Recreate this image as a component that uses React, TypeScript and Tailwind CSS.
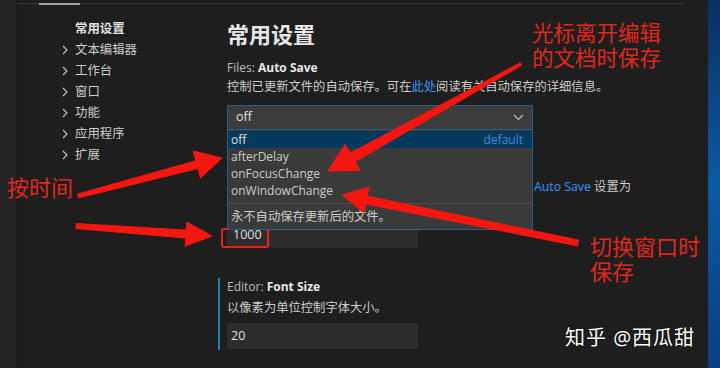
import React from "react";

type Pt = [number, number];

// tapered hand-drawn style arrow, returned as a polygon point list
const arrowPoints = (tail: Pt, tip: Pt, tailW: number, shaftW: number, headLen: number, headW: number) => {
  const dx = tip[0] - tail[0];
  const dy = tip[1] - tail[1];
  const len = Math.hypot(dx, dy);
  const d: Pt = [dx / len, dy / len];
  const p: Pt = [-d[1], d[0]];
  const b: Pt = [tip[0] - d[0] * headLen, tip[1] - d[1] * headLen];
  const at = (o: Pt, k: number): string => `${(o[0] + p[0] * k).toFixed(1)},${(o[1] + p[1] * k).toFixed(1)}`;
  return [
    at(tail, tailW / 2),
    at(b, shaftW / 2),
    at(b, headW / 2),
    `${tip[0]},${tip[1]}`,
    at(b, -headW / 2),
    at(b, -shaftW / 2),
    at(tail, -tailW / 2),
  ].join(" ");
};

const arrows = [
  arrowPoints([521, 64], [328, 171], 3, 10, 28, 30),
  arrowPoints([78, 196], [222, 158], 4, 8, 26, 28),
  arrowPoints([76, 226], [212, 236], 5, 8, 26, 24),
  arrowPoints([578, 243], [342, 195], 6, 8, 25, 26),
];

const tocItems = ["文本编辑器", "工作台", "窗口", "功能", "应用程序", "扩展"];

const Chevron = () => (
  <svg width="6" height="10" viewBox="0 0 6 10" className="mr-[7px] shrink-0">
    <path d="M1 1 L5 5 L1 9" fill="none" stroke="#c5c5c5" strokeWidth="1.1" />
  </svg>
);

const App: React.FC = () => {
  return (
    <div className="relative flex w-[720px] h-[368px] overflow-hidden bg-[#1e1e1e] font-['Open_Sans','Noto_Sans_CJK_SC',sans-serif] text-[#cccccc]">
      {/* left strip */}
      <div className="w-[17px] shrink-0 bg-[#242424] border-r border-[#1a1a1a]" />

      {/* settings editor */}
      <div className="flex-1 flex flex-col pt-[3px]">
        <div className="flex items-start w-[667px]">
          <div className="w-[22px] h-px bg-[#3a3a3a]" />
          <div className="w-[41px] h-[2px] bg-[#a0a0a0]" />
          <div className="flex-1 h-px bg-[#3a3a3a]" />
        </div>

        <div className="flex">
          {/* table of contents */}
          <div className="w-[210px] shrink-0 pl-[45px] pt-[13px] text-[12.4px]">
            <div className="pl-[13px] leading-[21px] font-bold text-[#e0e0e0]">常用设置</div>
            {tocItems.map((t) => (
              <div key={t} className="flex items-center leading-[21px]">
                <Chevron />
                <span>{t}</span>
              </div>
            ))}
          </div>

          {/* settings list */}
          <div className="flex flex-col w-[460px]">
            <h1 className="mt-[15px] text-[22px] leading-[28px] font-bold text-[#e7e7e7]">常用设置</h1>

            <div className="mt-[11px] text-[12px] leading-[18px] text-[#bdbdbd]">
              Files: <span className="font-bold text-[#e7e7e7]">Auto Save</span>
            </div>
            <div className="mt-px text-[12.3px] leading-[18px] whitespace-nowrap">
              控制已更新文件的自动保存。可在<span className="text-[#3794ff]">此处</span>阅读有关自动保存的详细信息。
            </div>

            {/* select + open dropdown */}
            <div className="relative mt-[9px] w-[306px] h-[25px]">
              <div className="flex items-center justify-between h-full px-[8px] bg-[#3c3c3c] border border-[#2b5d85] text-[12.5px] text-[#e0e0e0]">
                <span>off</span>
                <svg width="11" height="7" viewBox="0 0 11 7">
                  <path d="M1 1 L5.5 5.5 L10 1" fill="none" stroke="#c5c5c5" strokeWidth="1.1" />
                </svg>
              </div>
              <div className="absolute top-full left-0 z-10 w-full h-[100px] flex flex-col bg-[#3a3a3a] border-x border-b border-[#2b5d85] text-[12px] leading-[17px]">
                <div className="flex justify-between h-[17px] mt-px pl-[3px] pr-[9px] bg-[#04395e] text-[#e0e0e0]">
                  <span>off</span>
                  <span className="text-[#3f8fd8]">default</span>
                </div>
                <div className="pl-[3px] h-[17px]">afterDelay</div>
                <div className="pl-[3px] h-[17px]">onFocusChange</div>
                <div className="pl-[3px] h-[17px]">onWindowChange</div>
                <div className="mt-[4px] h-px bg-[#4a4a4a]" />
                <div className="mt-[4px] pl-[3px] text-[12.3px] leading-[18px]">永不自动保存更新后的文件。</div>
              </div>
            </div>

            {/* Files: Auto Save Delay, its left part lies under the open dropdown */}
            <div className="mt-[48px] ml-[307px] flex text-[12.3px] leading-[18px] whitespace-nowrap">
              <span className="text-[#3794ff]">Auto Save</span>
              <span>&nbsp;设置为</span>
            </div>
            <div className="relative mt-[26px] w-[191px] h-[26px] flex items-center pl-[6px] bg-[#2d2d2d] text-[12.5px] text-[#e0e0e0]">
              1000
              <div className="absolute left-[-6px] top-[6px] w-[48px] h-[20px] rounded-[3px] border-2 border-[#e8221a]" />
            </div>

            {/* Editor: Font Size */}
            <div className="mt-[30px] ml-[-9px] pl-[7px] pb-px border-l-2 border-[#1f7fa6]">
              <div className="text-[12px] leading-[18px] text-[#bdbdbd]">
                Editor: <span className="font-bold text-[#e7e7e7]">Font Size</span>
              </div>
              <div className="mt-[3px] text-[12.3px] leading-[18px]">以像素为单位控制字体大小。</div>
              <div className="mt-[6px] w-[191px] h-[26px] flex items-center pl-[4px] bg-[#2d2d2d] text-[12.5px] text-[#e0e0e0]">
                20
              </div>
            </div>
          </div>
        </div>
      </div>

      {/* desktop behind the window */}
      <div className="w-[12px] shrink-0 bg-gradient-to-b from-[#0a2f60] via-[#0c5aa4] to-[#0a3f7e]" />

      {/* annotations */}
      <svg className="absolute left-0 top-0 z-20 pointer-events-none" width="720" height="368" viewBox="0 0 720 368">
        {arrows.map((pts, i) => (
          <polygon key={i} points={pts} fill="#f5170f" stroke="#f5170f" strokeWidth="1" strokeLinejoin="round" />
        ))}
      </svg>
      <div className="absolute left-[532px] top-[20px] z-20 flex flex-col text-[21.5px] leading-[25px] text-[#e3261d]">
        <span>光标离开编辑</span>
        <span>的文档时保存</span>
      </div>
      <div className="absolute left-[7px] top-[175px] z-20 text-[22px] leading-[25px] text-[#e3261d]">按时间</div>
      <div className="absolute left-[590px] top-[234px] z-20 flex flex-col text-[22px] leading-[25px] text-[#e3261d]">
        <span>切换窗口时</span>
        <span>保存</span>
      </div>
      <div className="absolute left-[565px] top-[326px] z-20 text-[20px] leading-[24px] tracking-[1px] text-white [text-shadow:0_0_2px_#000]">
        知乎 @西瓜甜
      </div>
    </div>
  );
};

export default App;
